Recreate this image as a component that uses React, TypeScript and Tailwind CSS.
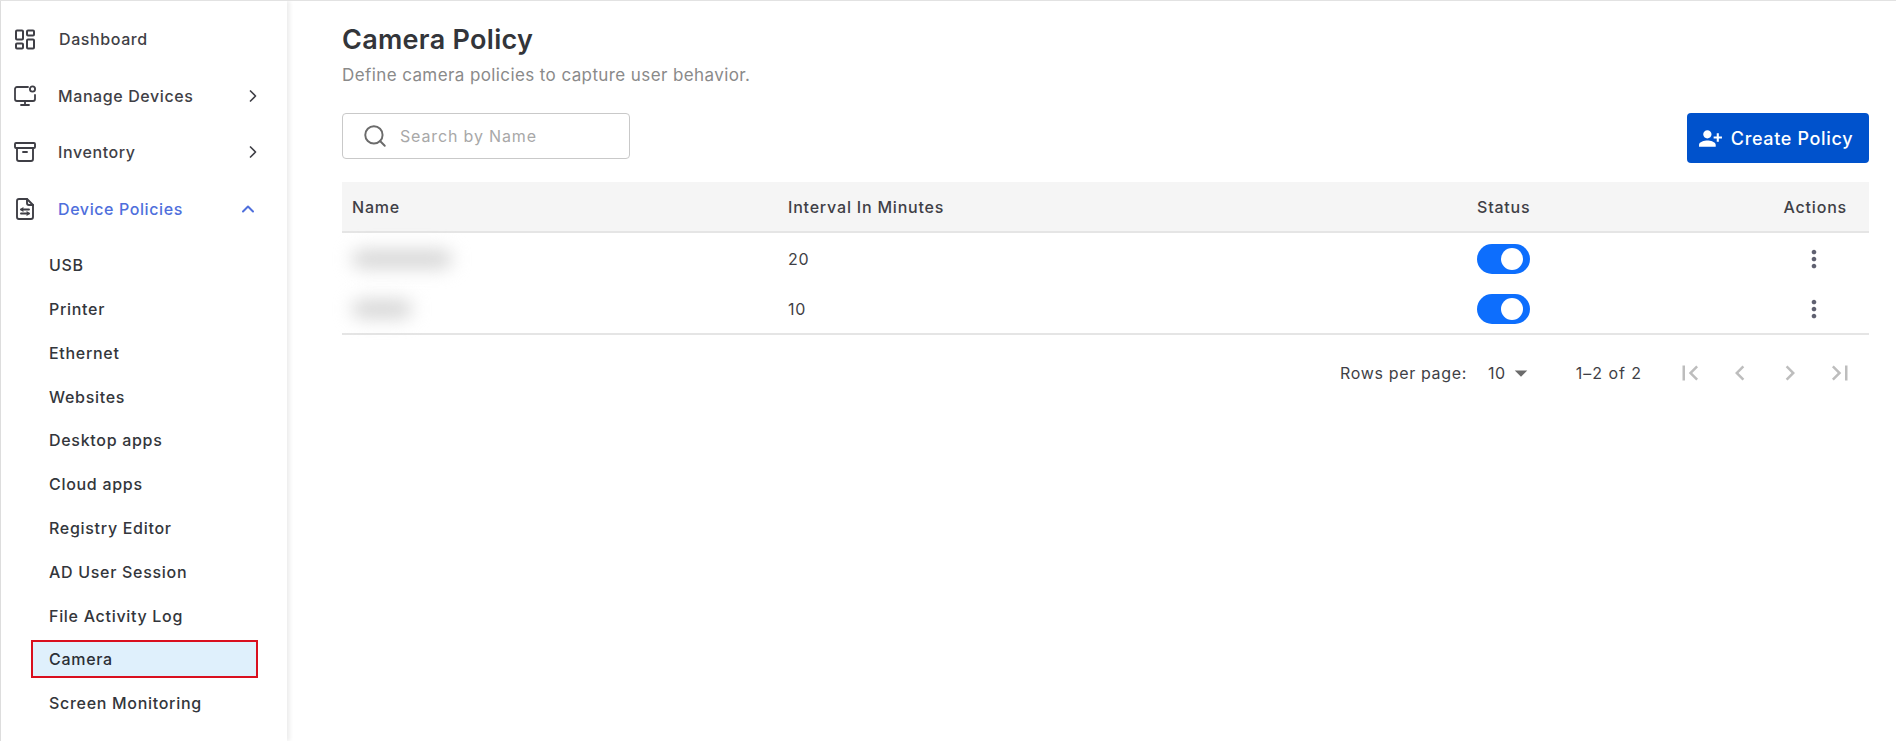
import React from "react";
import { LayoutDashboard, Archive, ChevronRight, ChevronUp, Search } from "lucide-react";
import { MdFirstPage, MdLastPage, MdChevronLeft, MdChevronRight, MdMoreVert, MdArrowDropDown, MdPersonAdd } from "react-icons/md";

const MonitorIcon = () => (
  <svg width="24" height="24" viewBox="0 0 24 24" fill="none" stroke="#3f3f46" strokeWidth="1.8" strokeLinecap="round" strokeLinejoin="round">
    <path d="M15 3H4a2 2 0 0 0-2 2v10a2 2 0 0 0 2 2h16a2 2 0 0 0 2-2v-4" />
    <circle cx="19.5" cy="5" r="2.6" />
    <path d="M12 17v4M8 21h8" />
  </svg>
);

const PolicyIcon = () => (
  <svg width="24" height="24" viewBox="0 0 24 24" fill="none" stroke="#3f3f46" strokeWidth="1.9" strokeLinecap="round" strokeLinejoin="round">
    <path d="M14 2H6a2 2 0 0 0-2 2v16a2 2 0 0 0 2 2h12a2 2 0 0 0 2-2V8z" />
    <path d="M14 2v4a2 2 0 0 0 2 2h4" />
    <path d="M8 12.5h8M8 16.5h8" />
    <path d="M10 11l-2 1.5 2 1.5M14 15l2 1.5-2 1.5" strokeWidth="1.3" />
  </svg>
);

const subItems = ["USB", "Printer", "Ethernet", "Websites", "Desktop apps", "Cloud apps", "Registry Editor", "AD User Session", "File Activity Log", "Camera", "Screen Monitoring"];

function TopItem({ icon, label, right, active, pad }: { icon: React.ReactNode; label: string; right?: React.ReactNode; active?: boolean; pad?: boolean }) {
  return (
    <div className="flex h-[56.6px] items-center pl-[12px] pr-[24px]">
      <span className="flex w-[24px] shrink-0 items-center justify-center">{icon}</span>
      <span className={`${pad ? "ml-[22px]" : "ml-[21px]"} flex-1 text-[16px] font-medium tracking-[0.6px] ${active ? "text-[#4f6fdc]" : "text-[#3f3f46]"}`}>{label}</span>
      {right}
    </div>
  );
}

function Toggle() {
  return (
    <div className="flex h-[30px] w-[53px] items-center justify-end rounded-full bg-[#0d6efd] pr-[7px]">
      <div className="h-[22px] w-[22px] rounded-full bg-white" />
    </div>
  );
}

function Row({ blur, value, border }: { blur: string; value: string; border?: boolean }) {
  return (
    <div className={`grid h-[51px] grid-cols-[436px_689px_1fr] items-center text-[16px] tracking-[0.7px] text-[#3f3f46] ${border ? "border-b-2 border-[#e5e5e5]" : ""}`}>
      <div className="pl-[10px]"><div className={`h-[18px] rounded-full bg-[#d4d4d4] blur-[9px] ${blur}`} /></div>
      <div className="pl-[10px]">{value}</div>
      <div className="flex items-center justify-between pl-[10px] pr-[41px]">
        <Toggle />
        <MdMoreVert size={28} className="text-[#5f6070]" />
      </div>
    </div>
  );
}

export default function App() {
  return (
    <div className="flex h-[741px] w-[1896px] overflow-hidden border-t border-[#e2e2e2] bg-white font-['Inter','Liberation_Sans',sans-serif]">
      <aside className="flex w-[287px] shrink-0 flex-col border-l-[1px] border-[#dddddd] pt-[10px] shadow-[3px_0_4px_rgba(0,0,0,0.07)]">
        <TopItem icon={<LayoutDashboard size={25} strokeWidth={2} color="#3f3f46" />} label="Dashboard" pad />
        <TopItem icon={<MonitorIcon />} label="Manage Devices" right={<ChevronRight size={20} color="#3f3f46" />} />
        <TopItem icon={<Archive size={24} strokeWidth={1.9} color="#3f3f46" />} label="Inventory" right={<ChevronRight size={20} color="#3f3f46" />} />
        <TopItem icon={<PolicyIcon />} label="Device Policies" active right={<ChevronUp size={20} color="#4f6fdc" strokeWidth={2.4} className="mr-[5px]" />} />
        <ul className="mt-[6px] flex flex-col pl-[31px] pr-[29px]">
          {subItems.map((s) =>
            s === "Camera" ? (
              <li key={s} className="my-[3px] -ml-[1.5px] flex h-[38px] items-center border-2 border-[#d90f1e] bg-[#dff0fc] pl-[16.5px] text-[16px] font-medium tracking-[0.7px] text-[#2b2f36]">{s}</li>
            ) : (
              <li key={s} className="my-[3.4px] flex h-[37px] items-center pl-[17px] text-[16px] font-medium tracking-[0.7px] text-[#33363b]">{s}</li>
            )
          )}
        </ul>
      </aside>
      <main className="flex flex-1 flex-col pl-[55px] pr-[27px] pt-[22px]">
        <h1 className="text-[27px] font-semibold leading-[34px] tracking-[0.3px] text-[#33353a]">Camera Policy</h1>
        <p className="mt-[7px] text-[17px] leading-[22px] tracking-[0.4px] text-[#8a8a8a]">Define camera policies to capture user behavior.</p>
        <div className="mt-[27px] flex items-start justify-between">
          <div className="flex h-[46px] w-[288px] items-center rounded-[4px] border border-[#c9c9c9] pl-[19px]">
            <Search size={26} strokeWidth={1.8} color="#6b6b6b" />
            <span className="ml-[12px] text-[16px] tracking-[0.85px] text-[#a8a8a8]">Search by Name</span>
          </div>
          <button className="flex h-[50px] w-[182px] items-center justify-center gap-[8px] rounded-[4px] bg-[#0052cc] pr-[5px] text-[18px] font-medium tracking-[0.65px] text-white">
            <MdPersonAdd size={25} className="-scale-x-100" />
            <span>Create Policy</span>
          </button>
        </div>
        <div className="mt-[19px] grid h-[51px] grid-cols-[436px_689px_1fr] items-center border-b-2 border-[#e5e5e5] bg-[#f5f5f5] text-[16px] font-medium tracking-[0.8px] text-[#3f3f46]">
          <div className="pl-[10px]">Name</div>
          <div className="pl-[10px]">Interval In Minutes</div>
          <div className="flex justify-between pl-[10px] pr-[22px]"><span>Status</span><span>Actions</span></div>
        </div>
        <Row blur="w-[100px]" value="20" />
        <Row blur="w-[60px]" value="10" border />
        <div className="mt-[13px] flex h-[50px] items-center justify-end text-[16px] tracking-[0.65px] text-[#3f3f46]">
          <span>Rows per page:</span>
          <span className="ml-[21px]">10</span>
          <MdArrowDropDown size={30} className="text-[#6b6b6b]" />
          <span className="ml-[40px] tracking-[0.95px]">1–2 of 2</span>
          <div className="ml-[33px] flex gap-[20px] pr-[14px] text-[#bdbdbd]">
            <MdFirstPage size={30} />
            <MdChevronLeft size={30} />
            <MdChevronRight size={30} />
            <MdLastPage size={30} />
          </div>
        </div>
      </main>
    </div>
  );
}
